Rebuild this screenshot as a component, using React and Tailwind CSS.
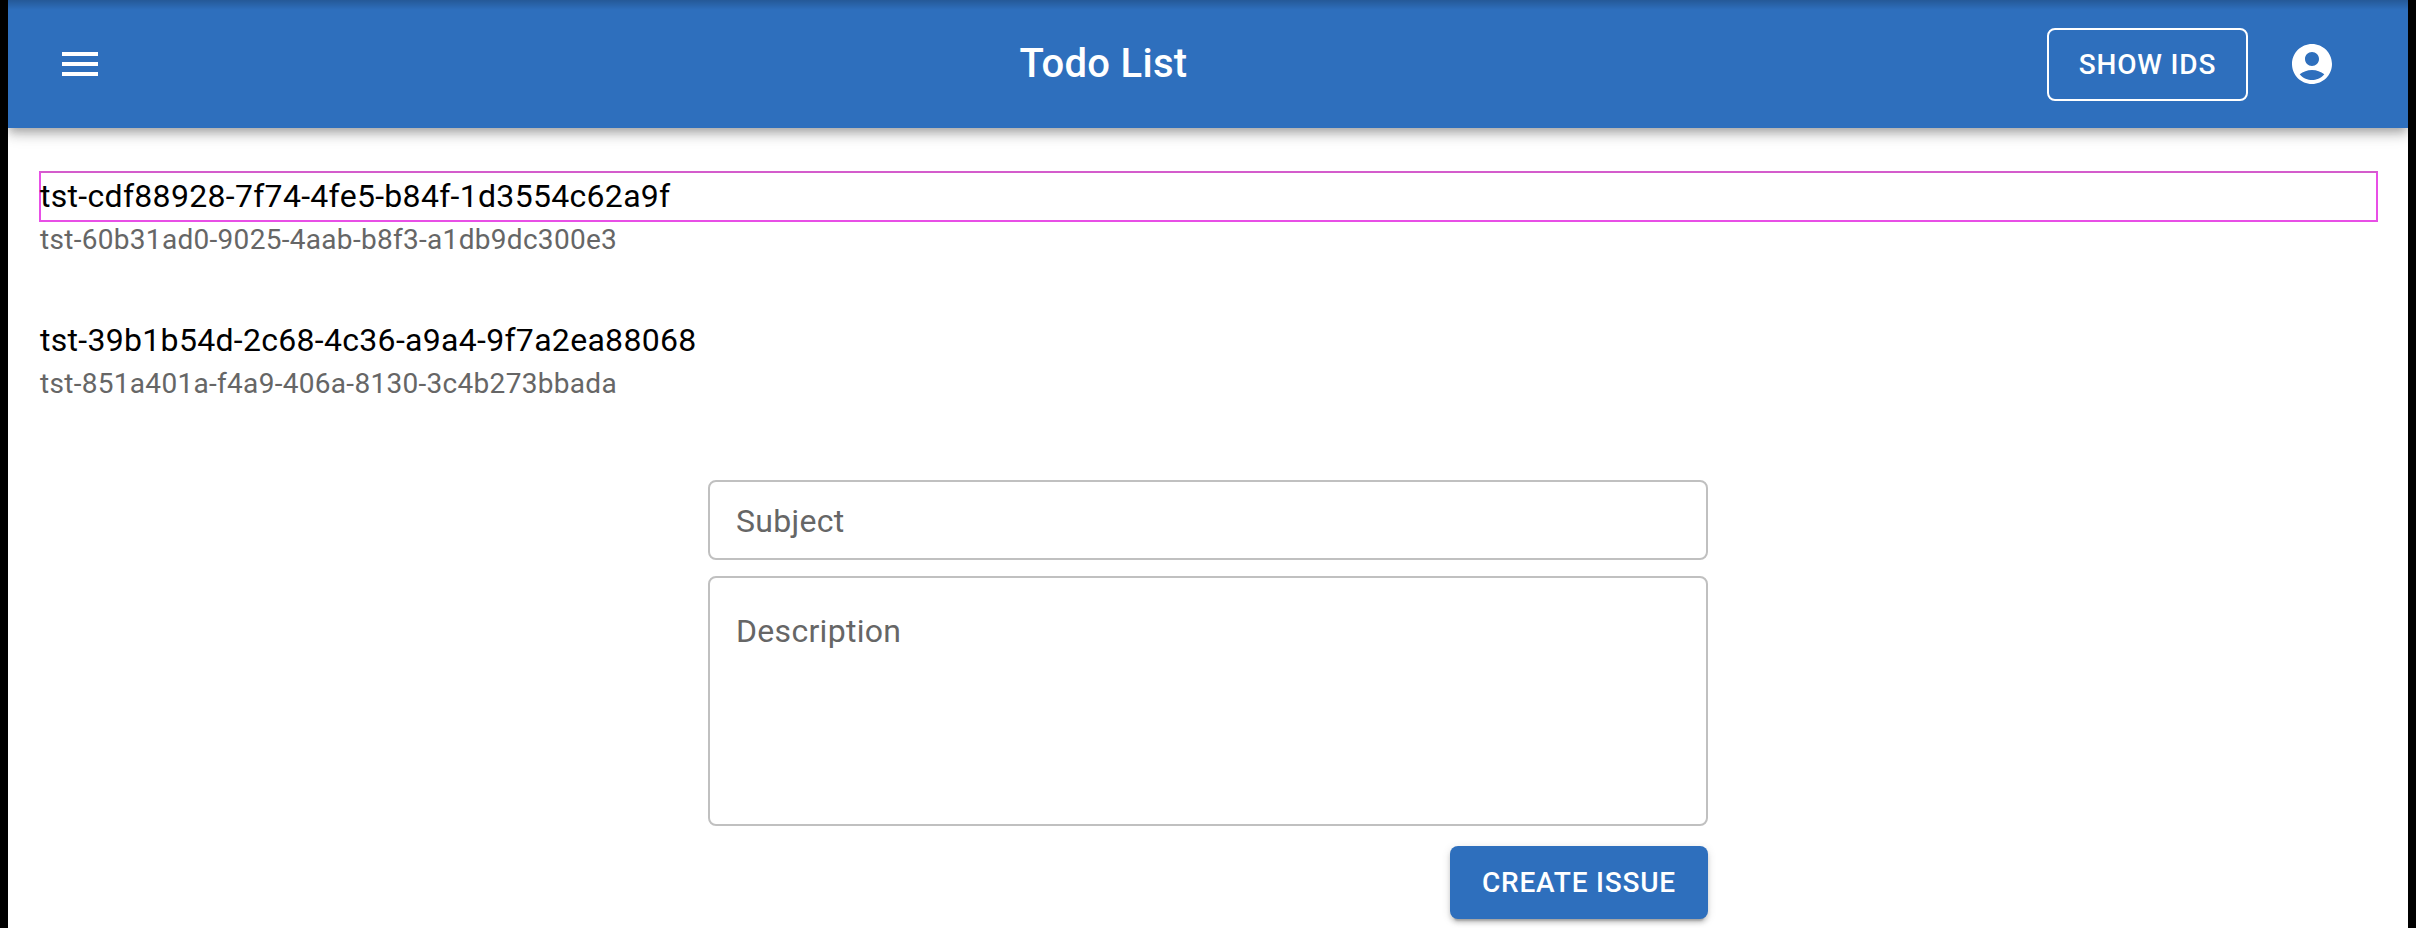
import React from "react";

const issues = [
  {
    id: "tst-cdf88928-7f74-4fe5-b84f-1d3554c62a9f",
    subject: "tst-60b31ad0-9025-4aab-b8f3-a1db9dc300e3",
    highlighted: true,
  },
  {
    id: "tst-39b1b54d-2c68-4c36-a9a4-9f7a2ea88068",
    subject: "tst-851a401a-f4a9-406a-8130-3c4b273bbada",
  },
];

function MenuIcon() {
  return (
    <svg className="size-12" viewBox="0 0 24 24" fill="currentColor" aria-hidden="true">
      <path d="M3 18h18v-2H3v2zm0-5h18v-2H3v2zm0-7v2h18V6H3z" />
    </svg>
  );
}

function AccountIcon() {
  return (
    <svg className="size-12" viewBox="0 0 24 24" fill="currentColor" aria-hidden="true">
      <path d="M12 2C6.48 2 2 6.48 2 12s4.48 10 10 10 10-4.48 10-10S17.52 2 12 2zm0 4c1.93 0 3.5 1.57 3.5 3.5S13.93 13 12 13s-3.5-1.57-3.5-3.5S10.07 6 12 6zm0 14c-2.03 0-4.43-.82-6.14-2.88C7.55 15.8 9.68 15 12 15s4.45.8 6.14 2.12C16.43 19.18 14.03 20 12 20z" />
    </svg>
  );
}

function AppBar() {
  return (
    <header className="flex h-32 shrink-0 items-center bg-[#2e6fbd] bg-linear-to-b from-black/20 to-transparent to-[10px] pr-[72px] pl-12 text-white shadow-[0_4px_8px_-2px_rgba(0,0,0,0.2),0_8px_10px_0_rgba(0,0,0,0.14),0_2px_20px_0_rgba(0,0,0,0.12)]">
      <button className="mr-14 flex" aria-label="menu">
        <MenuIcon />
      </button>
      <h1 className="flex-1 text-center text-[40px] leading-[64px] font-medium tracking-[0.3px]">
        Todo List
      </h1>
      <button className="h-[73px] w-[201px] rounded-lg border-2 border-white text-[28px] leading-[49px] font-medium tracking-[0.8px]">
        SHOW IDS
      </button>
      <button className="ml-10 flex" aria-label="account">
        <AccountIcon />
      </button>
    </header>
  );
}

function IssueItem({ id, subject, highlighted }) {
  return (
    <li className="py-7">
      <p
        className={
          "text-[32px] tracking-[0.3px] text-black " +
          (highlighted
            ? "-mt-px -mr-0.5 -mb-0.5 -ml-px h-[51px] border-2 border-[#e84fe6] border-t-[#d45ccc] -indent-px leading-[46px]"
            : "leading-[48px]")
        }
      >
        {id}
      </p>
      <p className="text-[28px] leading-10 tracking-[0.3px] text-[#666666]">{subject}</p>
    </li>
  );
}

export default function App() {
  return (
    <div className="h-[928px] overflow-hidden bg-black px-2 font-['Roboto',sans-serif]">
      <div className="flex h-full flex-col overflow-hidden bg-white">
        <AppBar />
        <ul className="px-8 pt-4">
          {issues.map((issue) => (
            <IssueItem key={issue.id} {...issue} />
          ))}
        </ul>
        <form className="mx-auto mt-12 flex w-[1000px] flex-col">
          <div className="h-20 rounded-lg border-2 border-[#c0c0c0] px-[26px] pt-[15px] text-[32px] leading-[48px] tracking-[0.3px] text-[#666666]">
            Subject
          </div>
          <div className="mt-4 h-[250px] rounded-lg border-2 border-[#c0c0c0] px-[26px] pt-[29px] text-[32px] leading-[48px] tracking-[0.3px] text-[#666666]">
            Description
          </div>
          <button
            type="button"
            className="mt-5 h-[73px] w-[258px] self-end rounded-lg bg-[#2e6fbd] text-[28px] leading-[49px] font-medium tracking-[0.8px] text-white shadow-[0_6px_2px_-4px_rgba(0,0,0,0.2),0_4px_4px_0_rgba(0,0,0,0.14),0_2px_10px_0_rgba(0,0,0,0.12)]"
          >
            CREATE ISSUE
          </button>
        </form>
      </div>
    </div>
  );
}
